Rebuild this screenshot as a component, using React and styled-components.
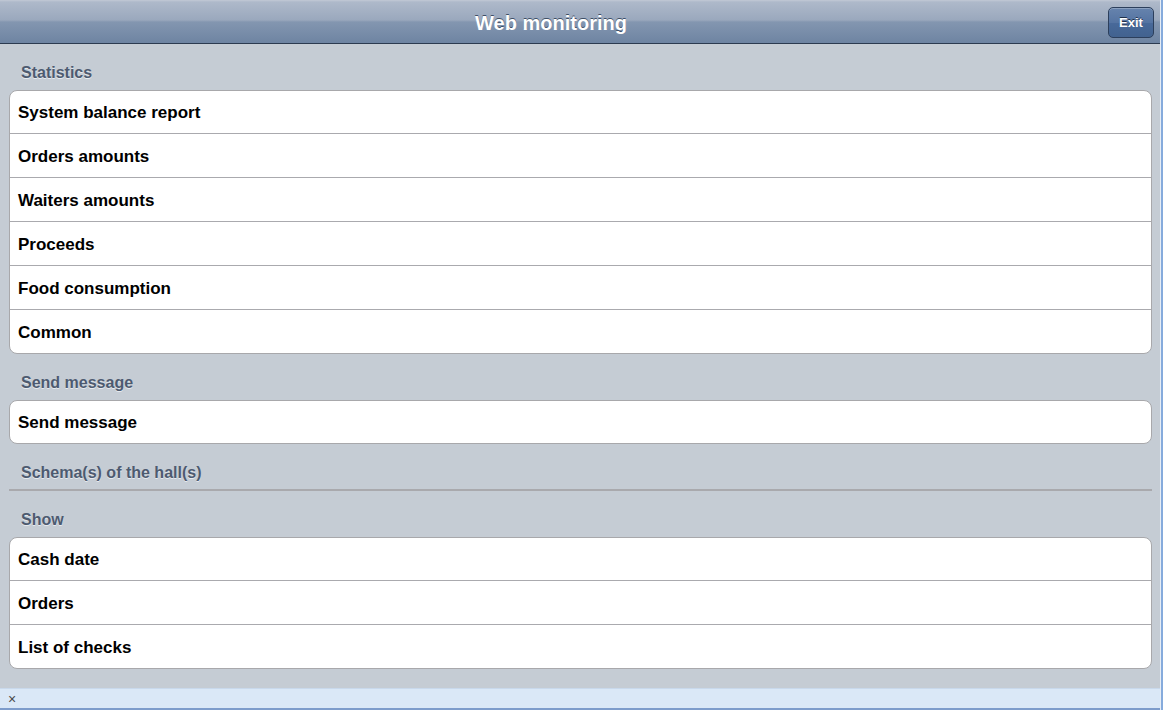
import React from 'react';
import styled, { createGlobalStyle } from 'styled-components';

const sections = [
  {
    title: 'Statistics',
    items: ['System balance report', 'Orders amounts', 'Waiters amounts', 'Proceeds', 'Food consumption', 'Common'],
  },
  { title: 'Send message', items: ['Send message'] },
  { title: 'Schema(s) of the hall(s)', items: [] },
  { title: 'Show', items: ['Cash date', 'Orders', 'List of checks'] },
];

const App = () => {
  return (
    <>
      <GlobalStyle />
      <Frame>
        <Page>
          <Header>
            <Title>Web monitoring</Title>
            <ExitButton>Exit</ExitButton>
          </Header>
          <Content>
            {sections.map((section) => (
              <Section key={section.title}>
                <Divider $underline={section.items.length === 0}>{section.title}</Divider>
                {section.items.length > 0 && (
                  <List>
                    {section.items.map((item) => (
                      <Item key={item}>{item}</Item>
                    ))}
                  </List>
                )}
              </Section>
            ))}
          </Content>
          <StatusBar>
            <Close>×</Close>
          </StatusBar>
        </Page>
      </Frame>
    </>
  );
};

const GlobalStyle = createGlobalStyle`
  html, body {
    margin: 0;
    padding: 0;
    background: #c5ccd4;
    font-family: "Liberation Sans", Arial, sans-serif;
  }
`;

const Frame = styled.div`
  width: 1163px;
  height: 710px;
  box-sizing: border-box;
  border-right: 2px solid #86abdc;
  overflow: hidden;
`;

const Page = styled.div`
  height: 100%;
  display: flex;
  flex-direction: column;
  background: #c5ccd4;
  border-right: 1px solid #e6edf6;
`;

const Header = styled.div`
  position: relative;
  height: 43px;
  flex-shrink: 0;
  display: flex;
  align-items: center;
  justify-content: center;
  background: linear-gradient(#c2c9d5 0px, #aeb9ca 2px, #9aa8bd 20px, #8396b0 22px, #6e84a2 100%);
  border-bottom: 1px solid #2c3b50;
`;

const Title = styled.h1`
  margin: 3px 58px 0 0;
  font-size: 20px;
  font-weight: bold;
  color: #fff;
  text-shadow: 0 -1px 0 #3d4e66;
`;

const ExitButton = styled.button`
  position: absolute;
  right: 6px;
  top: 7px;
  width: 46px;
  height: 31px;
  box-sizing: border-box;
  border: 1px solid #2c3f5c;
  border-radius: 5px;
  background: linear-gradient(#6683ad 0%, #5574a2 50%, #48699a 51%, #42628f 100%);
  box-shadow: inset 0 1px 0 rgba(255, 255, 255, 0.25);
  color: #fff;
  font-family: "Liberation Sans", Arial, sans-serif;
  font-size: 13px;
  font-weight: bold;
  text-shadow: 0 -1px 0 #1f2f48;
  padding: 0;
`;

const Content = styled.div`
  flex: 1;
  padding: 0 8px 0 9px;
`;

const Section = styled.div``;

const Divider = styled.div`
  padding: 19px 12px ${(p) => (p.$underline ? '6px' : '7px')};
  line-height: 20px;
  font-size: 16px;
  font-weight: bold;
  color: #4d5a70;
  text-shadow: 0 1px 0 #e6eaef;
  border-bottom: ${(p) => (p.$underline ? '2px solid #a9a9ad' : 'none')};
`;

const List = styled.ul`
  margin: 0;
  padding: 0;
  list-style: none;
  background: #fff;
  border: 1px solid #a8a8ab;
  border-radius: 8px;
  overflow: hidden;
`;

const Item = styled.li`
  box-sizing: border-box;
  height: 44px;
  display: flex;
  align-items: center;
  padding: 2px 0 0 8px;
  font-size: 17px;
  font-weight: bold;
  color: #000;
  border-top: 1px solid #aaaaae;

  &:first-child {
    height: 42px;
    padding-top: 1px;
    border-top: none;
  }
`;

const StatusBar = styled.div`
  height: 19px;
  flex-shrink: 0;
  margin-top: 19px;
  display: flex;
  align-items: center;
  padding-left: 8px;
  background: #dae8f7;
  border-top: 1px solid #c9d9ec;
  border-bottom: 2px solid #7d9ccb;
`;

const Close = styled.span`
  font-size: 14px;
  line-height: 1;
  color: #4a4a4a;
`;

export default App;
